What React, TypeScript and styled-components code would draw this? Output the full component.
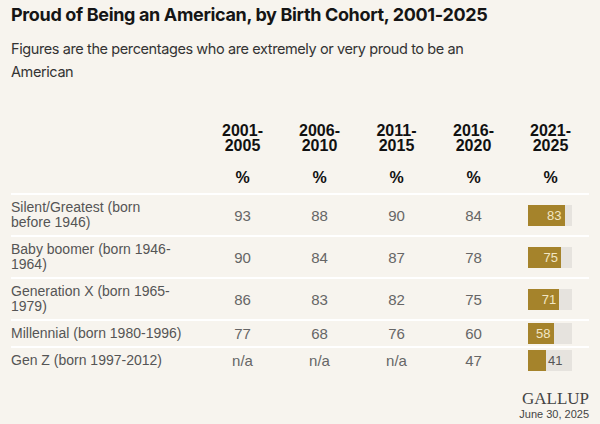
import * as React from 'react';
import styled, {createGlobalStyle} from "styled-components";

type CohortRow = {
	label: string[]
	values: (number | null)[]
	latest: number
}

const periods = [['2001-', '2005'], ['2006-', '2010'], ['2011-', '2015'], ['2016-', '2020'], ['2021-', '2025']]

const rows: CohortRow[] = [
	{label: ['Silent/Greatest (born', 'before 1946)'], values: [93, 88, 90, 84], latest: 83},
	{label: ['Baby boomer (born 1946-', '1964)'], values: [90, 84, 87, 78], latest: 75},
	{label: ['Generation X (born 1965-', '1979)'], values: [86, 83, 82, 75], latest: 71},
	{label: ['Millennial (born 1980-1996)'], values: [77, 68, 76, 60], latest: 58},
	{label: ['Gen Z (born 1997-2012)'], values: [null, null, null, 47], latest: 41},
]

const TRACK = 44

export default function App() {
	return (
		<>
			<GlobalStyle/>
			<Page>
				<Title>Proud of Being an American, by Birth Cohort, 2001-2025</Title>
				<Subtitle>Figures are the percentages who are extremely or very proud to be an<br/>American</Subtitle>

				<Table>
					<HeadRow>
						<span/>
						{periods.map(p => (
							<HeadCell key={p[0]}>
								<Years>{p[0]}<br/>{p[1]}</Years>
								<Percent>%</Percent>
							</HeadCell>
						))}
					</HeadRow>

					{rows.map(row => (
						<Row key={row.label[0]}>
							<Label>
								{row.label.map((line, i) => (
									<React.Fragment key={i}>{i > 0 && <br/>}{line}</React.Fragment>
								))}
							</Label>
							{row.values.map((v, i) => (
								<Value key={i}>{v === null ? 'n/a' : v}</Value>
							))}
							<BarCell>
								<Track>
									<Fill style={{width: row.latest / 100 * TRACK}}>
										{row.latest >= 50 && <InsideNum>{row.latest}</InsideNum>}
									</Fill>
									{row.latest < 50 && <OutsideNum>{row.latest}</OutsideNum>}
								</Track>
							</BarCell>
						</Row>
					))}
				</Table>

				<Footer>
					<Brand>GALLUP</Brand>
					<DateText>June 30, 2025</DateText>
				</Footer>
			</Page>
		</>
	)
}

const GlobalStyle = createGlobalStyle`
  html, body {
    margin: 0;
    background: #f7f4ee;
  }
`

const Page = styled.div`
  width: 600px;
  height: 424px;
  box-sizing: border-box;
  padding: 3px 11px 0 11px;
  background: #f7f4ee;
  font-family: "Liberation Sans", Arial, sans-serif;
  display: flex;
  flex-direction: column;
  overflow: hidden;
`

const Title = styled.h1`
  margin: 0;
  font-family: Inter, "Liberation Sans", sans-serif;
  font-weight: 700;
  font-size: 18px;
  line-height: 24px;
  color: #151515;
  letter-spacing: -0.35px;
`

const Subtitle = styled.p`
  margin: 10px 0 0;
  font-family: Inter, "Liberation Sans", sans-serif;
  font-weight: 400;
  font-size: 14.5px;
  line-height: 23px;
  color: #333;
  letter-spacing: -0.4px;
`

const Table = styled.div`
  margin-top: 41px;
  display: flex;
  flex-direction: column;
`

const grid = `
  display: grid;
  grid-template-columns: 1fr repeat(5, 77px);
  align-items: center;
`

const HeadRow = styled.div`
  ${grid};
  padding-bottom: 7px;
`

const HeadCell = styled.div`
  display: flex;
  flex-direction: column;
  align-items: center;
  font-weight: 700;
  font-size: 16px;
  color: #111;
  text-align: center;
`

const Years = styled.div`
  line-height: 14.5px;
`

const Percent = styled.div`
  margin-top: 17px;
  line-height: 16px;
`

const Row = styled.div`
  ${grid};
  border-top: 2px solid #ffffff;
  padding: 2px 0;
`

const Label = styled.div`
  padding: 3px 0;
  font-size: 14px;
  line-height: 15px;
  color: #555;
`

const Value = styled.div`
  text-align: center;
  font-size: 15px;
  line-height: 17px;
  color: #666;
`

const BarCell = styled.div`
  display: flex;
  justify-content: center;
  padding-right: 1px;
`

const Track = styled.div`
  position: relative;
  width: ${TRACK}px;
  height: 21px;
  background: #e6e3de;
  display: flex;
`

const Fill = styled.div`
  height: 100%;
  background: #a5832b;
  display: flex;
  align-items: center;
  justify-content: flex-end;
  box-sizing: border-box;
  padding-right: 3px;
`

const InsideNum = styled.span`
  font-size: 13px;
  color: #f2e6c4;
`

const OutsideNum = styled.span`
  align-self: center;
  margin-left: 2px;
  font-size: 13px;
  color: #555;
`

const Footer = styled.div`
  margin-top: auto;
  padding-bottom: 3px;
  align-self: flex-end;
  display: flex;
  flex-direction: column;
  align-items: flex-end;
`

const Brand = styled.div`
  font-family: "Liberation Serif", "Times New Roman", serif;
  font-size: 17px;
  line-height: 16px;
  color: #444;
`

const DateText = styled.div`
  margin-top: 1px;
  font-size: 11px;
  line-height: 13px;
  color: #444;
`
